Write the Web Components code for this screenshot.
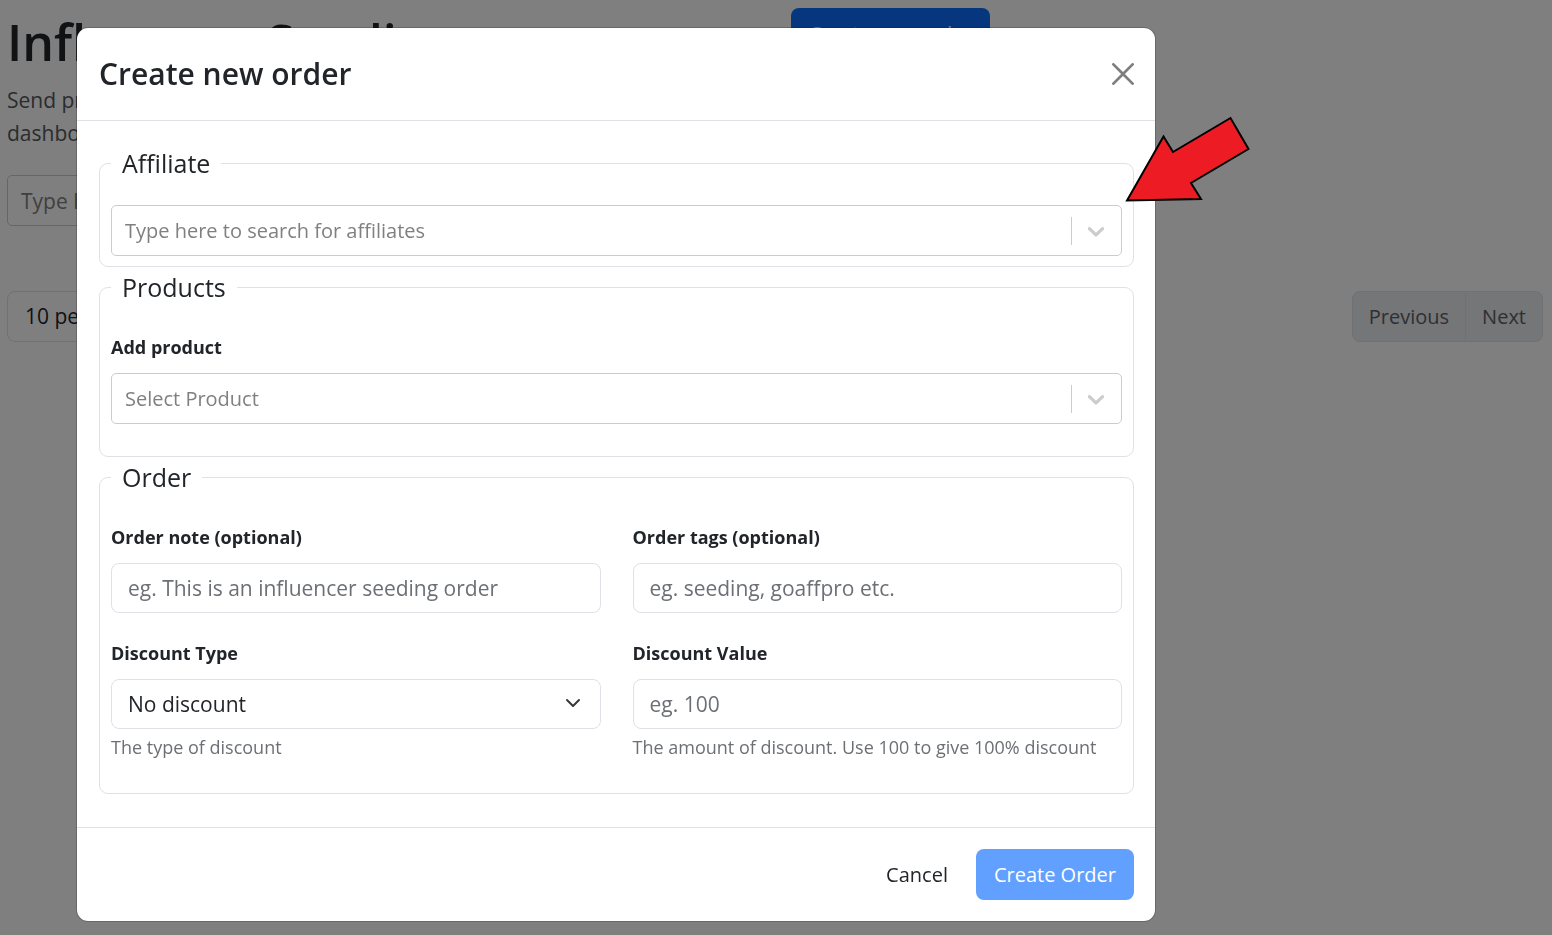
<!DOCTYPE html>
<html lang="en">
<head>
<meta charset="utf-8">
<meta name="viewport" content="width=device-width, initial-scale=1">
<title>Influencer Seeding</title>
<style>
  html, body { margin: 0; min-height: 100%; }
  body {
    --ink: #212529;
    --muted: #6c7075;
    --line: #dee2e6;
    --primary: #0d6efd;
    --text: 21px;
    --compact: 20px;
    --small: 18px;
    --control: 51px;
    background: #fff;
    color: var(--ink);
    font-family: "Open Sans", "Noto Sans", sans-serif;
    font-size: var(--text);
    line-height: 33px;
  }
</style>
</head>
<body>
<seeding-page></seeding-page>
<order-modal heading="Create new order">
  <field-group legend="Affiliate">
    <search-select label="Affiliate" hide-label placeholder="Type here to search for affiliates"></search-select>
  </field-group>
  <field-group legend="Products">
    <search-select class="spaced" label="Add product" placeholder="Select Product"></search-select>
  </field-group>
  <field-group legend="Order">
    <field-grid>
      <text-field label="Order note (optional)" placeholder="eg. This is an influencer seeding order"></text-field>
      <text-field label="Order tags (optional)" placeholder="eg. seeding, goaffpro etc."></text-field>
      <choice-field label="Discount Type" options="No discount|Percentage|Fixed amount" hint="The type of discount"></choice-field>
      <text-field label="Discount Value" placeholder="eg. 100" hint="The amount of discount. Use 100 to give 100% discount"></text-field>
    </field-grid>
  </field-group>
  <action-button slot="footer" variant="plain">Cancel</action-button>
  <action-button slot="footer" variant="primary" disabled>Create Order</action-button>
</order-modal>

<script>
const reset = `
  *, *::before, *::after { box-sizing: border-box; }
  button, input, select { font: inherit; color: inherit; margin: 0; }
`;

class BaseElement extends HTMLElement {
  connectedCallback() {
    if (this.shadowRoot) return;
    const root = this.attachShadow({ mode: "open" });
    root.innerHTML = `<style>${reset}${this.styles()}</style>${this.markup()}`;
  }
  attr(name) { return this.getAttribute(name) || ""; }
}

const fieldStyles = `
  :host { display: block; min-width: 0; }
  label { display: block; font-size: var(--small); font-weight: 700; line-height: 36px; margin-bottom: 8px; }
  input, select {
    display: block; width: 100%; height: 50px; padding: 0 16px;
    border: 1px solid var(--line); border-radius: 8px; background: #fff; outline: 0;
  }
  input::placeholder { color: var(--muted); opacity: 1; }
  .hint { font-size: var(--small); line-height: 28px; margin-top: 4px; color: var(--muted); }
`;

customElements.define("text-field", class extends BaseElement {
  styles() { return fieldStyles; }
  markup() {
    return `<label for="control">${this.attr("label")}</label>
      <input id="control" type="text" placeholder="${this.attr("placeholder")}">
      ${this.attr("hint") ? `<div class="hint">${this.attr("hint")}</div>` : ""}`;
  }
});

customElements.define("choice-field", class extends BaseElement {
  styles() {
    return fieldStyles + `
      .box { position: relative; }
      select { appearance: none; }
      svg { position: absolute; right: 20px; top: 16px; width: 16px; height: 16px; pointer-events: none; }`;
  }
  markup() {
    const options = this.attr("options").split("|").map(o => `<option>${o}</option>`).join("");
    return `<label for="control">${this.attr("label")}</label>
      <div class="box"><select id="control">${options}</select>
        <svg viewBox="0 0 16 16" fill="none" stroke="#343a40" stroke-width="2" stroke-linecap="round" stroke-linejoin="round"><path d="m2 5 6 6 6-6"/></svg>
      </div>
      <div class="hint">${this.attr("hint")}</div>`;
  }
});

customElements.define("search-select", class extends BaseElement {
  styles() {
    return fieldStyles + `
      :host(.spaced) { margin-bottom: 22px; }
      .box { display: flex; align-items: center; height: var(--control); border: 1px solid #ccc; border-radius: 5px; background: #fff; }
      .box input { flex: 1; min-width: 0; height: 100%; border: 0; padding: 0 13px; background: none; font-size: var(--compact); }
      .box input::placeholder { color: #808080; }
      .rule { width: 1px; height: 28px; background: #ccc; }
      svg { width: 28px; height: 28px; margin: 0 11px 0 10px; fill: #ccc; }`;
  }
  markup() {
    const hidden = this.hasAttribute("hide-label");
    return `${hidden ? "" : `<label for="control">${this.attr("label")}</label>`}
      <div class="box">
        <input id="control" type="text" role="combobox" aria-expanded="false" ${hidden ? `aria-label="${this.attr("label")}"` : ""} placeholder="${this.attr("placeholder")}">
        <span class="rule"></span>
        <svg viewBox="0 0 20 20" aria-hidden="true"><path d="M4.516 7.548c0.436-0.446 1.043-0.481 1.576 0l3.908 3.747 3.908-3.747c0.533-0.481 1.141-0.446 1.574 0 0.436 0.445 0.408 1.197 0 1.615-0.406 0.418-4.695 4.502-4.695 4.502-0.217 0.223-0.502 0.335-0.787 0.335s-0.57-0.112-0.789-0.335c0 0-4.287-4.084-4.695-4.502s-0.436-1.17 0-1.615z"/></svg>
      </div>`;
  }
});

customElements.define("field-group", class extends BaseElement {
  styles() {
    return `
      :host { display: block; }
      fieldset { margin: 0; min-width: 0; padding: 0 11px 10px; border: 1px solid var(--line); border-radius: 9px; }
      legend { padding: 0 11px; margin-bottom: 22px; font-size: 25px; line-height: 40px; }`;
  }
  markup() { return `<fieldset><legend>${this.attr("legend")}</legend><slot></slot></fieldset>`; }
});

customElements.define("field-grid", class extends BaseElement {
  styles() {
    return `:host { display: grid; grid-template-columns: repeat(2, minmax(0, 1fr)); gap: 22px 32px; margin-bottom: 22px; }`;
  }
  markup() { return `<slot></slot>`; }
});

customElements.define("action-button", class extends BaseElement {
  styles() {
    return `
      :host { display: block; }
      button { height: var(--control); padding: 0 18px; border: 0; border-radius: 8px; background: none; white-space: nowrap; font-size: var(--compact); }
      :host([variant="primary"]) button { background: var(--primary); color: #fff; }
      :host([variant="primary"]) button:disabled { opacity: .65; }`;
  }
  markup() { return `<button type="button" ${this.hasAttribute("disabled") ? "disabled" : ""}><slot></slot></button>`; }
});

customElements.define("order-modal", class extends BaseElement {
  styles() {
    return `
      :host { position: fixed; inset: 0; overflow: auto; background: rgba(0, 0, 0, .5); }
      .dialog {
        position: relative; width: calc(100% - 96px); max-width: 1080px; margin: 27px 20px 12px 76px;
        border: 1px solid rgba(0, 0, 0, .18); border-radius: 12px; background: #fff; background-clip: padding-box;
      }
      header { display: flex; align-items: center; justify-content: space-between; padding: 22px 21px 22px 22px; border-bottom: 1px solid var(--line); }
      h2 { margin: 0; font-size: 30px; font-weight: 600; line-height: 48px; }
      .close { display: grid; place-items: center; width: 22px; height: 22px; padding: 0; border: 0; background: none; }
      .close svg { display: block; width: 22px; height: 22px; fill: #000; opacity: .5; }
      .body { padding: 22px 21px 33px 22px; }
      footer { display: flex; justify-content: flex-end; gap: 10px; padding: 21px; border-top: 1px solid var(--line); }
      .arrow { position: absolute; left: 100%; top: 86px; width: 128px; height: 92px; margin-left: -32px; pointer-events: none; }`;
  }
  markup() {
    return `<div class="dialog" role="dialog" aria-modal="true" aria-labelledby="title">
      <header>
        <h2 id="title">${this.attr("heading")}</h2>
        <button class="close" type="button" aria-label="Close"><svg viewBox="0 0 16 16"><path d="M.293.293a1 1 0 0 1 1.414 0L8 6.586 14.293.293a1 1 0 1 1 1.414 1.414L9.414 8l6.293 6.293a1 1 0 0 1-1.414 1.414L8 9.414l-6.293 6.293a1 1 0 0 1-1.414-1.414L6.586 8 .293 1.707a1 1 0 0 1 0-1.414z"/></svg></button>
      </header>
      <div class="body"><slot></slot></div>
      <footer><slot name="footer"></slot></footer>
      <svg class="arrow" viewBox="0 0 128 92" aria-hidden="true"><path d="M4 86.500 40.500 22.500 50 38 107.500 4 125.500 35 68 69 78 85Z" fill="#ed1c24" stroke="#000" stroke-width="2"/></svg>
    </div>`;
  }
});

customElements.define("seeding-page", class extends BaseElement {
  styles() {
    return `
      :host { display: block; padding: 8px 9px 8px 7px; }
      .top { display: grid; grid-template-columns: repeat(2, minmax(0, 1fr)); column-gap: 32px; align-items: start; margin-bottom: 65px; }
      h1 { margin: 2px 0 10px; font-size: 50px; font-weight: 600; line-height: 64px; }
      p { margin: 0 0 25px; color: #55595d; }
      .search { display: block; width: 100%; height: var(--control); padding: 0 13px; border: 1px solid #ccc; border-radius: 5px; }
      .search::placeholder { color: #808080; opacity: 1; }
      .bar { display: flex; justify-content: space-between; }
      select { appearance: none; width: 220px; height: var(--control); padding: 0 17px; border: 1px solid var(--line); border-radius: 8px; background: #fff; }
      .pager { display: flex; }
      .pager button { height: var(--control); padding: 0 16px; border: 1px solid var(--line); background: #e9ecef; color: #5c6066; font-size: var(--compact); }
      .pager button:first-child { border-radius: 8px 0 0 8px; }
      .pager button:last-child { border-radius: 0 8px 8px 0; border-left: 0; }`;
  }
  markup() {
    return `<div class="top">
        <div>
          <h1>Influencer Seeding</h1>
          <p>Send products to your affiliates as gifts, straight from the page of your dashboard</p>
          <input class="search" type="text" aria-label="Search affiliates" placeholder="Type here to search for affiliates">
        </div>
        <action-button variant="primary">Create new order</action-button>
      </div>
      <div class="bar">
        <select aria-label="Rows per page"><option>10 per page</option></select>
        <div class="pager"><button type="button" disabled>Previous</button><button type="button" disabled>Next</button></div>
      </div>`;
  }
});
</script>
</body>
</html>
